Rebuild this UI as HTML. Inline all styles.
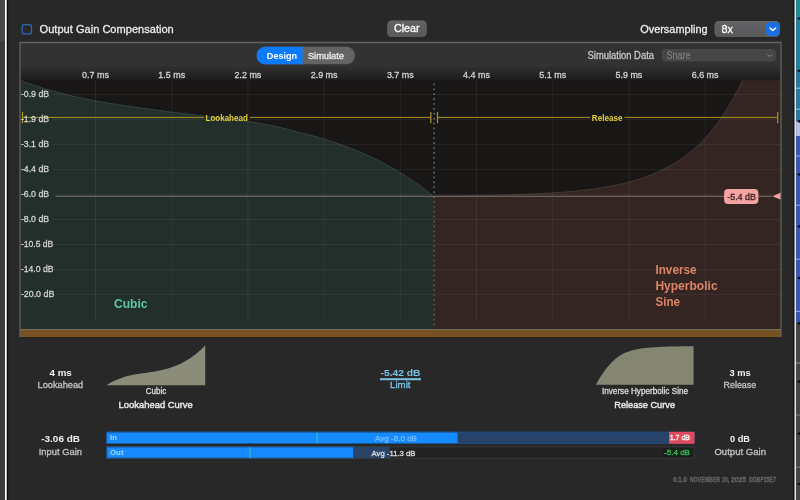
<!DOCTYPE html>
<html lang="en"><head><meta charset="utf-8"><title>Limiter</title>
<style>
html,body{margin:0;padding:0;background:#282828;overflow:hidden}
body{width:800px;height:500px;font-family:"Liberation Sans", sans-serif}
svg{display:block;filter:blur(0.3px)}
</style></head><body>
<svg width="800" height="500" viewBox="0 0 800 500" font-family='"Liberation Sans", sans-serif'>
<rect x="0" y="0" width="800" height="500" fill="#282828"/>
<rect x="0" y="0" width="5.2" height="500" fill="#3b3b3b"/>
<rect x="0" y="0" width="5.2" height="41.2" fill="#494949"/>
<rect x="5" y="0" width="1.9" height="500" fill="#ffffff"/>
<rect x="6.8" y="0" width="1.3" height="500" fill="#0c0c0c"/>
<rect x="793.4" y="0" width="1.1" height="500" fill="#0a0a0a"/>
<rect x="794.5" y="0" width="1.7" height="500" fill="#e4e8ee"/>
<rect x="796.2" y="0" width="3.8" height="17" fill="#1c8e96"/>
<rect x="796.2" y="17" width="3.8" height="54" fill="#2282a4"/>
<rect x="796.2" y="71" width="3.8" height="50" fill="#2a7aa0"/>
<rect x="796.2" y="121" width="3.8" height="15" fill="#b8c0e8"/>
<rect x="796.2" y="136" width="3.8" height="39" fill="#3a58b0"/>
<rect x="796.2" y="175" width="3.8" height="148" fill="#3a58b0"/>
<rect x="796.2" y="323" width="3.8" height="177" fill="#464646"/>
<path d="M796.6,18.5 L800,16.9 L800,20.1 Z" fill="#08101c"/>
<path d="M796.6,70.8 L800,69.2 L800,72.39999999999999 Z" fill="#08101c"/>
<path d="M796.6,121.3 L800,119.7 L800,122.89999999999999 Z" fill="#08101c"/>
<path d="M796.6,174.5 L800,172.9 L800,176.1 Z" fill="#08101c"/>
<path d="M796.6,226.5 L800,224.9 L800,228.1 Z" fill="#08101c"/>
<path d="M796.6,278 L800,276.4 L800,279.6 Z" fill="#08101c"/>
<path d="M796.6,323.3 L800,321.7 L800,324.90000000000003 Z" fill="#08101c"/>
<path d="M796.6,381.6 L800,380.0 L800,383.20000000000005 Z" fill="#08101c"/>
<path d="M796.6,433.6 L800,432.0 L800,435.20000000000005 Z" fill="#08101c"/>
<path d="M796.6,484 L800,482.4 L800,485.6 Z" fill="#08101c"/>
<rect x="796.2" y="87.60000000000001" width="3.8" height="1.2" fill="#90b8e0"/>
<rect x="796.2" y="108.60000000000001" width="3.8" height="1.2" fill="#90b8e0"/>
<rect x="796.2" y="155.4" width="3.8" height="1.2" fill="#8aa0e0"/>
<rect x="796.2" y="204.6" width="3.8" height="1.2" fill="#8aa0e0"/>
<rect x="796.2" y="258.59999999999997" width="3.8" height="1.2" fill="#8aa0e0"/>
<rect x="796.2" y="310.79999999999995" width="3.8" height="1.2" fill="#8aa0e0"/>
<rect x="796.2" y="362.4" width="3.8" height="1.2" fill="#888"/>
<rect x="796.2" y="414.4" width="3.8" height="1.2" fill="#777"/>
<rect x="796.2" y="466.59999999999997" width="3.8" height="1.2" fill="#777"/>
<rect x="22.2" y="24.7" width="9.3" height="9.2" rx="2.2" fill="#272729" stroke="#2a68b8" stroke-width="1.3"/>
<text x="39.6" y="33.1" font-size="11.4" fill="#ececec" stroke="#ececec" stroke-width="0.3" textLength="134.2" lengthAdjust="spacingAndGlyphs">Output Gain Compensation</text>
<defs><linearGradient id="bg1" x1="0" y1="0" x2="0" y2="1"><stop offset="0" stop-color="#6a6a6c"/><stop offset="0.15" stop-color="#616163"/><stop offset="1" stop-color="#59595b"/></linearGradient></defs>
<rect x="387.1" y="20.6" width="39.8" height="16.5" rx="4.5" fill="url(#bg1)"/>
<text x="394" y="32.0" font-size="11.0" fill="#ffffff" stroke="#ffffff" stroke-width="0.3" textLength="25.5" lengthAdjust="spacingAndGlyphs">Clear</text>
<text x="640.2" y="33.1" font-size="11.4" fill="#ececec" stroke="#ececec" stroke-width="0.3" textLength="67.4" lengthAdjust="spacingAndGlyphs">Oversampling</text>
<rect x="714.4" y="21" width="65.6" height="16" rx="4.5" fill="url(#bg1)"/>
<text x="721.4" y="32.6" font-size="11.4" fill="#ffffff" stroke="#ffffff" stroke-width="0.3" textLength="11.4" lengthAdjust="spacingAndGlyphs">8x</text>
<rect x="766" y="22.2" width="13.6" height="13.8" rx="4" fill="#1b6fe3"/>
<path d="M770,28 L772.8,30.5 L775.6,28" fill="none" stroke="#fff" stroke-width="1.5" stroke-linecap="round" stroke-linejoin="round"/>
<rect x="20" y="42.5" width="761" height="294.8" fill="#323232"/>
<rect x="20" y="67.8" width="761" height="261.2" fill="#191716"/>
<path d="M20.00,80.50 C24.17,81.88 36.67,86.25 45.00,88.75 C53.33,91.25 61.67,93.50 70.00,95.50 C78.33,97.50 86.67,99.17 95.00,100.75 C103.33,102.33 111.67,103.71 120.00,105.00 C128.33,106.29 136.67,107.33 145.00,108.50 C153.33,109.67 161.67,110.92 170.00,112.00 C178.33,113.08 186.67,113.98 195.00,115.00 C203.33,116.02 211.25,117.05 220.00,118.10 C228.75,119.15 238.33,119.93 247.50,121.30 C256.67,122.67 265.83,124.30 275.00,126.30 C284.17,128.30 294.25,131.15 302.50,133.30 C310.75,135.45 315.33,136.25 324.50,139.20 C333.67,142.15 347.42,146.87 357.50,151.00 C367.58,155.13 375.83,159.08 385.00,164.00 C394.17,168.92 404.33,175.12 412.50,180.50 C420.67,185.88 430.42,193.67 434.00,196.30 L434,329 L20,329 Z" fill="#222f2a"/>
<path d="M20.00,80.50 C24.17,81.88 36.67,86.25 45.00,88.75 C53.33,91.25 61.67,93.50 70.00,95.50 C78.33,97.50 86.67,99.17 95.00,100.75 C103.33,102.33 111.67,103.71 120.00,105.00 C128.33,106.29 136.67,107.33 145.00,108.50 C153.33,109.67 161.67,110.92 170.00,112.00 C178.33,113.08 186.67,113.98 195.00,115.00 C203.33,116.02 211.25,117.05 220.00,118.10 C228.75,119.15 238.33,119.93 247.50,121.30 C256.67,122.67 265.83,124.30 275.00,126.30 C284.17,128.30 294.25,131.15 302.50,133.30 C310.75,135.45 315.33,136.25 324.50,139.20 C333.67,142.15 347.42,146.87 357.50,151.00 C367.58,155.13 375.83,159.08 385.00,164.00 C394.17,168.92 404.33,175.12 412.50,180.50 C420.67,185.88 430.42,193.67 434.00,196.30" fill="none" stroke="#3a4a45" stroke-width="0.8"/>
<path d="M434.00,196.00 L440.00,195.95 L446.00,195.90 L452.00,195.85 L458.00,195.78 L464.00,195.71 L470.00,195.63 L476.00,195.55 L482.00,195.45 L488.00,195.34 L494.00,195.22 L500.00,195.08 L506.00,194.92 L512.00,194.75 L518.00,194.56 L524.00,194.35 L530.00,194.11 L536.00,193.84 L542.00,193.54 L548.00,193.21 L554.00,192.83 L560.00,192.42 L566.00,191.95 L572.00,191.43 L578.00,190.85 L584.00,190.20 L590.00,189.47 L596.00,188.66 L602.00,187.75 L608.00,186.74 L614.00,185.61 L620.00,184.34 L626.00,182.93 L632.00,181.35 L638.00,179.58 L644.00,177.61 L650.00,175.41 L656.00,172.94 L662.00,170.19 L668.00,167.12 L674.00,163.68 L680.00,159.84 L686.00,155.55 L692.00,150.76 L698.00,145.40 L704.00,139.42 L710.00,132.73 L716.00,125.26 L722.00,116.91 L728.00,107.57 L734.00,97.15 L740.00,85.50 L742.50,80.25 L781,80.25 L781,329 L434,329 Z" fill="#342522"/>
<path d="M434.00,196.00 L440.00,195.95 L446.00,195.90 L452.00,195.85 L458.00,195.78 L464.00,195.71 L470.00,195.63 L476.00,195.55 L482.00,195.45 L488.00,195.34 L494.00,195.22 L500.00,195.08 L506.00,194.92 L512.00,194.75 L518.00,194.56 L524.00,194.35 L530.00,194.11 L536.00,193.84 L542.00,193.54 L548.00,193.21 L554.00,192.83 L560.00,192.42 L566.00,191.95 L572.00,191.43 L578.00,190.85 L584.00,190.20 L590.00,189.47 L596.00,188.66 L602.00,187.75 L608.00,186.74 L614.00,185.61 L620.00,184.34 L626.00,182.93 L632.00,181.35 L638.00,179.58 L644.00,177.61 L650.00,175.41 L656.00,172.94 L662.00,170.19 L668.00,167.12 L674.00,163.68 L680.00,159.84 L686.00,155.55 L692.00,150.76 L698.00,145.40 L704.00,139.42 L710.00,132.73 L716.00,125.26 L722.00,116.91 L728.00,107.57 L734.00,97.15 L740.00,85.50 L742.50,80.25" fill="none" stroke="#4e3f3b" stroke-width="0.8"/>
<defs><linearGradient id="rg" x1="0" y1="0" x2="0" y2="1"><stop offset="0" stop-color="#2f2f2f"/><stop offset="0.6" stop-color="#2c2c2c" stop-opacity="0.5"/><stop offset="1" stop-color="#2c2c2c" stop-opacity="0"/></linearGradient></defs>
<rect x="20" y="67.8" width="761" height="14" fill="url(#rg)"/>
<rect x="95.00" y="80" width="1" height="240.5" fill="#ffffff" fill-opacity="0.06"/>
<rect x="171.20" y="80" width="1" height="240.5" fill="#ffffff" fill-opacity="0.06"/>
<rect x="247.40" y="80" width="1" height="240.5" fill="#ffffff" fill-opacity="0.06"/>
<rect x="323.60" y="80" width="1" height="240.5" fill="#ffffff" fill-opacity="0.06"/>
<rect x="399.80" y="80" width="1" height="240.5" fill="#ffffff" fill-opacity="0.06"/>
<rect x="476.00" y="80" width="1" height="240.5" fill="#ffffff" fill-opacity="0.06"/>
<rect x="552.20" y="80" width="1" height="240.5" fill="#ffffff" fill-opacity="0.06"/>
<rect x="628.40" y="80" width="1" height="240.5" fill="#ffffff" fill-opacity="0.06"/>
<rect x="704.60" y="80" width="1" height="240.5" fill="#ffffff" fill-opacity="0.06"/>
<rect x="53" y="94.0" width="728" height="1" fill="#ffffff" fill-opacity="0.055"/>
<rect x="53" y="119.0" width="728" height="1" fill="#ffffff" fill-opacity="0.055"/>
<rect x="53" y="144.0" width="728" height="1" fill="#ffffff" fill-opacity="0.055"/>
<rect x="53" y="169.0" width="728" height="1" fill="#ffffff" fill-opacity="0.055"/>
<rect x="53" y="194.0" width="728" height="1" fill="#ffffff" fill-opacity="0.055"/>
<rect x="53" y="219.0" width="728" height="1" fill="#ffffff" fill-opacity="0.055"/>
<rect x="53" y="244.0" width="728" height="1" fill="#ffffff" fill-opacity="0.055"/>
<rect x="53" y="269.0" width="728" height="1" fill="#ffffff" fill-opacity="0.055"/>
<rect x="53" y="294.0" width="728" height="1" fill="#ffffff" fill-opacity="0.055"/>
<rect x="433.45" y="83.51" width="1.3" height="1.7" fill="#7a7a7a"/>
<rect x="433.45" y="88.41" width="1.3" height="1.7" fill="#7a7a7a"/>
<rect x="433.45" y="93.31" width="1.3" height="1.7" fill="#7a7a7a"/>
<rect x="433.45" y="98.20" width="1.3" height="1.7" fill="#7a7a7a"/>
<rect x="433.45" y="103.10" width="1.3" height="1.7" fill="#7a7a7a"/>
<rect x="433.45" y="108.00" width="1.3" height="1.7" fill="#7a7a7a"/>
<rect x="433.45" y="112.90" width="1.3" height="1.7" fill="#7a7a7a"/>
<rect x="433.45" y="117.80" width="1.3" height="1.7" fill="#7a7a7a"/>
<rect x="433.45" y="122.69" width="1.3" height="1.7" fill="#7a7a7a"/>
<rect x="433.45" y="127.59" width="1.3" height="1.7" fill="#7a7a7a"/>
<rect x="433.45" y="132.49" width="1.3" height="1.7" fill="#7a7a7a"/>
<rect x="433.45" y="137.39" width="1.3" height="1.7" fill="#7a7a7a"/>
<rect x="433.45" y="142.29" width="1.3" height="1.7" fill="#7a7a7a"/>
<rect x="433.45" y="147.18" width="1.3" height="1.7" fill="#7a7a7a"/>
<rect x="433.45" y="152.08" width="1.3" height="1.7" fill="#7a7a7a"/>
<rect x="433.45" y="156.98" width="1.3" height="1.7" fill="#7a7a7a"/>
<rect x="433.45" y="161.88" width="1.3" height="1.7" fill="#7a7a7a"/>
<rect x="433.45" y="166.78" width="1.3" height="1.7" fill="#7a7a7a"/>
<rect x="433.45" y="171.67" width="1.3" height="1.7" fill="#7a7a7a"/>
<rect x="433.45" y="176.57" width="1.3" height="1.7" fill="#7a7a7a"/>
<rect x="433.45" y="181.47" width="1.3" height="1.7" fill="#7a7a7a"/>
<rect x="433.45" y="186.37" width="1.3" height="1.7" fill="#7a7a7a"/>
<rect x="433.45" y="191.27" width="1.3" height="1.7" fill="#7a7a7a"/>
<rect x="433.45" y="196.16" width="1.3" height="1.7" fill="#7a7a7a"/>
<rect x="433.45" y="201.06" width="1.3" height="1.7" fill="#626262"/>
<rect x="433.45" y="205.96" width="1.3" height="1.7" fill="#626262"/>
<rect x="433.45" y="210.86" width="1.3" height="1.7" fill="#626262"/>
<rect x="433.45" y="215.76" width="1.3" height="1.7" fill="#626262"/>
<rect x="433.45" y="220.65" width="1.3" height="1.7" fill="#626262"/>
<rect x="433.45" y="225.55" width="1.3" height="1.7" fill="#626262"/>
<rect x="433.45" y="230.45" width="1.3" height="1.7" fill="#626262"/>
<rect x="433.45" y="235.35" width="1.3" height="1.7" fill="#626262"/>
<rect x="433.45" y="240.25" width="1.3" height="1.7" fill="#626262"/>
<rect x="433.45" y="245.14" width="1.3" height="1.7" fill="#626262"/>
<rect x="433.45" y="250.04" width="1.3" height="1.7" fill="#626262"/>
<rect x="433.45" y="254.94" width="1.3" height="1.7" fill="#626262"/>
<rect x="433.45" y="259.84" width="1.3" height="1.7" fill="#626262"/>
<rect x="433.45" y="264.74" width="1.3" height="1.7" fill="#626262"/>
<rect x="433.45" y="269.63" width="1.3" height="1.7" fill="#626262"/>
<rect x="433.45" y="274.53" width="1.3" height="1.7" fill="#626262"/>
<rect x="433.45" y="279.43" width="1.3" height="1.7" fill="#626262"/>
<rect x="433.45" y="284.33" width="1.3" height="1.7" fill="#626262"/>
<rect x="433.45" y="289.23" width="1.3" height="1.7" fill="#626262"/>
<rect x="433.45" y="294.12" width="1.3" height="1.7" fill="#626262"/>
<rect x="433.45" y="299.02" width="1.3" height="1.7" fill="#626262"/>
<rect x="433.45" y="303.92" width="1.3" height="1.7" fill="#626262"/>
<rect x="433.45" y="308.82" width="1.3" height="1.7" fill="#626262"/>
<rect x="433.45" y="313.72" width="1.3" height="1.7" fill="#626262"/>
<rect x="433.45" y="318.61" width="1.3" height="1.7" fill="#626262"/>
<rect x="433.45" y="323.51" width="1.3" height="1.7" fill="#626262"/>
<rect x="55.6" y="195.8" width="716.4" height="1" fill="#7a726c"/>
<rect x="22.5" y="116.9" width="181.3" height="1" fill="#a8941f"/>
<rect x="249.8" y="116.9" width="181.0" height="1" fill="#a8941f"/>
<rect x="437.5" y="116.9" width="152.5" height="1" fill="#a8941f"/>
<rect x="624.5" y="116.9" width="153.2" height="1" fill="#a8941f"/>
<rect x="21.9" y="112" width="1.2" height="11.2" fill="#a8941f"/>
<rect x="430.2" y="112" width="1.2" height="11.2" fill="#a8941f"/>
<rect x="436.9" y="112" width="1.2" height="11.2" fill="#a8941f"/>
<rect x="777.1" y="112" width="1.2" height="11.2" fill="#a8941f"/>
<text x="205.5" y="120.8" font-size="9" fill="#e6d03a" font-weight="bold" textLength="42.3" lengthAdjust="spacingAndGlyphs">Lookahead</text>
<text x="591.8" y="120.8" font-size="9" fill="#e6d03a" font-weight="bold" textLength="30.7" lengthAdjust="spacingAndGlyphs">Release</text>
<text x="20.9" y="97.0" font-size="8.9" fill="#d2d2d2" stroke="#d2d2d2" stroke-width="0.3" textLength="28.2" lengthAdjust="spacingAndGlyphs">-0.9 dB</text>
<text x="20.9" y="122.0" font-size="8.9" fill="#d2d2d2" stroke="#d2d2d2" stroke-width="0.3" textLength="28.2" lengthAdjust="spacingAndGlyphs">-1.9 dB</text>
<text x="20.9" y="147.0" font-size="8.9" fill="#d2d2d2" stroke="#d2d2d2" stroke-width="0.3" textLength="28.2" lengthAdjust="spacingAndGlyphs">-3.1 dB</text>
<text x="20.9" y="172.0" font-size="8.9" fill="#d2d2d2" stroke="#d2d2d2" stroke-width="0.3" textLength="28.2" lengthAdjust="spacingAndGlyphs">-4.4 dB</text>
<text x="20.9" y="197.0" font-size="8.9" fill="#d2d2d2" stroke="#d2d2d2" stroke-width="0.3" textLength="28.2" lengthAdjust="spacingAndGlyphs">-6.0 dB</text>
<text x="20.9" y="222.0" font-size="8.9" fill="#d2d2d2" stroke="#d2d2d2" stroke-width="0.3" textLength="28.2" lengthAdjust="spacingAndGlyphs">-8.0 dB</text>
<text x="20.9" y="247.0" font-size="8.9" fill="#d2d2d2" stroke="#d2d2d2" stroke-width="0.3" textLength="32.4" lengthAdjust="spacingAndGlyphs">-10.5 dB</text>
<text x="20.9" y="272.0" font-size="8.9" fill="#d2d2d2" stroke="#d2d2d2" stroke-width="0.3" textLength="32.6" lengthAdjust="spacingAndGlyphs">-14.0 dB</text>
<text x="20.9" y="297.0" font-size="8.9" fill="#d2d2d2" stroke="#d2d2d2" stroke-width="0.3" textLength="33.4" lengthAdjust="spacingAndGlyphs">-20.0 dB</text>
<text x="82.1" y="77.9" font-size="9.1" fill="#d2d2d2" stroke="#d2d2d2" stroke-width="0.3" textLength="26.8" lengthAdjust="spacingAndGlyphs">0.7 ms</text>
<text x="158.3" y="77.9" font-size="9.1" fill="#d2d2d2" stroke="#d2d2d2" stroke-width="0.3" textLength="26.8" lengthAdjust="spacingAndGlyphs">1.5 ms</text>
<text x="234.5" y="77.9" font-size="9.1" fill="#d2d2d2" stroke="#d2d2d2" stroke-width="0.3" textLength="26.8" lengthAdjust="spacingAndGlyphs">2.2 ms</text>
<text x="310.7" y="77.9" font-size="9.1" fill="#d2d2d2" stroke="#d2d2d2" stroke-width="0.3" textLength="26.8" lengthAdjust="spacingAndGlyphs">2.9 ms</text>
<text x="386.9" y="77.9" font-size="9.1" fill="#d2d2d2" stroke="#d2d2d2" stroke-width="0.3" textLength="26.8" lengthAdjust="spacingAndGlyphs">3.7 ms</text>
<text x="463.1" y="77.9" font-size="9.1" fill="#d2d2d2" stroke="#d2d2d2" stroke-width="0.3" textLength="26.8" lengthAdjust="spacingAndGlyphs">4.4 ms</text>
<text x="539.3" y="77.9" font-size="9.1" fill="#d2d2d2" stroke="#d2d2d2" stroke-width="0.3" textLength="26.8" lengthAdjust="spacingAndGlyphs">5.1 ms</text>
<text x="615.5" y="77.9" font-size="9.1" fill="#d2d2d2" stroke="#d2d2d2" stroke-width="0.3" textLength="26.8" lengthAdjust="spacingAndGlyphs">5.9 ms</text>
<text x="691.7" y="77.9" font-size="9.1" fill="#d2d2d2" stroke="#d2d2d2" stroke-width="0.3" textLength="26.8" lengthAdjust="spacingAndGlyphs">6.6 ms</text>
<text x="114" y="307.6" font-size="12.2" fill="#5fc8a0" font-weight="bold" textLength="33.5" lengthAdjust="spacingAndGlyphs">Cubic</text>
<text x="655.4" y="273.6" font-size="12.2" fill="#dd8468" font-weight="bold" textLength="41.2" lengthAdjust="spacingAndGlyphs">Inverse</text>
<text x="655.4" y="289.8" font-size="12.2" fill="#dd8468" font-weight="bold" textLength="62.2" lengthAdjust="spacingAndGlyphs">Hyperbolic</text>
<text x="655.4" y="306" font-size="12.2" fill="#dd8468" font-weight="bold" textLength="24.6" lengthAdjust="spacingAndGlyphs">Sine</text>
<rect x="724.1" y="188.9" width="34.3" height="15.1" rx="4" fill="#f3a3a2"/>
<text x="727.2" y="199.5" font-size="9.1" fill="#3a1c1c" stroke="#3a1c1c" stroke-width="0.3" textLength="28.8" lengthAdjust="spacingAndGlyphs">-5.4 dB</text>
<path d="M772.5,196.2 L781,192.6 L781,199.8 Z" fill="#f2a3a3"/>
<rect x="20" y="329" width="761" height="1.1" fill="#726e55"/>
<rect x="20" y="330" width="761" height="7.3" fill="#785122"/>
<rect x="19.4" y="337.3" width="762.2" height="1" fill="#1f1f1d"/>
<path d="M20,337.3 L20,42.5 L781,42.5 L781,337.3" fill="none" stroke="#626262" stroke-width="1.3"/>
<rect x="256.6" y="46.8" width="98.4" height="17.4" rx="8.7" fill="#646466"/>
<path d="M302.5,46.8 H265.3 a8.7,8.7 0 0 0 0,17.4 H302.5 Z" fill="#0a7aff"/>
<text x="266.8" y="58.7" font-size="9.6" fill="#ffffff" font-weight="bold" textLength="30.4" lengthAdjust="spacingAndGlyphs">Design</text>
<text x="307.9" y="58.7" font-size="9.6" fill="#f0f0f0" stroke="#f0f0f0" stroke-width="0.3" textLength="36.1" lengthAdjust="spacingAndGlyphs">Simulate</text>
<text x="587.5" y="59.1" font-size="10.2" fill="#c8c8c8" stroke="#c8c8c8" stroke-width="0.3" textLength="66.5" lengthAdjust="spacingAndGlyphs">Simulation Data</text>
<rect x="661.6" y="49" width="114.4" height="12.6" rx="4" fill="#464648"/>
<text x="666.5" y="59.0" font-size="10.2" fill="#7c7c7e" stroke="#7c7c7e" stroke-width="0.3" textLength="24.1" lengthAdjust="spacingAndGlyphs">Snare</text>
<path d="M767.6,54.6 L769.6,56.6 L771.6,54.6" fill="none" stroke="#8a8a8a" stroke-width="1" stroke-linecap="round" stroke-linejoin="round"/>
<text x="49.5" y="375.8" font-size="9.5" fill="#f2f2f2" font-weight="bold" textLength="22.25" lengthAdjust="spacingAndGlyphs">4 ms</text>
<text x="37.5" y="387.5" font-size="9.8" fill="#c4c4c4" stroke="#c4c4c4" stroke-width="0.3" textLength="45.75" lengthAdjust="spacingAndGlyphs">Lookahead</text>
<path d="M106.20,385.20 C107.46,384.50 110.20,382.53 113.75,381.00 C117.30,379.47 122.91,377.27 127.50,376.00 C132.09,374.73 136.72,374.17 141.30,373.40 C145.88,372.63 150.42,372.27 155.00,371.40 C159.58,370.53 164.22,369.65 168.80,368.20 C173.38,366.75 177.92,365.11 182.50,362.70 C187.08,360.29 192.52,356.60 196.30,353.75 C200.08,350.90 203.72,346.96 205.20,345.60 L205.2,385.2 Z" fill="#8b8c79"/>
<text x="145.7" y="393.75" font-size="8.7" fill="#dcdcdc" stroke="#dcdcdc" stroke-width="0.3" textLength="20.6" lengthAdjust="spacingAndGlyphs">Cubic</text>
<text x="118.6" y="408.2" font-size="9.9" fill="#e6e6e6" textLength="74.2" lengthAdjust="spacingAndGlyphs" stroke="#e6e6e6" stroke-width="0.45">Lookahead Curve</text>
<text x="380.5" y="375.8" font-size="9.5" fill="#7cc4e6" font-weight="bold" textLength="40.0" lengthAdjust="spacingAndGlyphs">-5.42 dB</text>
<rect x="380" y="378.2" width="41" height="2" fill="#7cc4e6"/>
<text x="390" y="388" font-size="9.8" fill="#7cc4e6" stroke="#7cc4e6" stroke-width="0.3" textLength="20.5" lengthAdjust="spacingAndGlyphs">Limit</text>
<path d="M595.80,384.80 C596.67,383.33 599.22,378.77 601.00,376.00 C602.78,373.23 604.67,370.53 606.50,368.20 C608.33,365.87 610.17,363.83 612.00,362.00 C613.83,360.17 615.43,358.68 617.50,357.20 C619.57,355.72 622.10,354.23 624.40,353.10 C626.70,351.98 629.02,351.15 631.30,350.45 C633.58,349.75 635.82,349.31 638.10,348.90 C640.38,348.49 641.55,348.33 645.00,348.00 C648.45,347.67 654.22,347.15 658.80,346.90 C663.38,346.65 666.70,346.60 672.50,346.50 C678.30,346.40 690.08,346.33 693.60,346.30 L693.6,384.8 Z" fill="#858672"/>
<text x="602" y="393.75" font-size="8.7" fill="#dcdcdc" stroke="#dcdcdc" stroke-width="0.3" textLength="86" lengthAdjust="spacingAndGlyphs">Inverse Hyperbolic Sine</text>
<text x="614.25" y="408.2" font-size="9.9" fill="#e6e6e6" textLength="60.75" lengthAdjust="spacingAndGlyphs" stroke="#e6e6e6" stroke-width="0.45">Release Curve</text>
<text x="729.5" y="375.8" font-size="9.5" fill="#f2f2f2" font-weight="bold" textLength="21.25" lengthAdjust="spacingAndGlyphs">3 ms</text>
<text x="723.5" y="387.5" font-size="9.8" fill="#c4c4c4" stroke="#c4c4c4" stroke-width="0.3" textLength="32.75" lengthAdjust="spacingAndGlyphs">Release</text>
<text x="41.25" y="442" font-size="9.5" fill="#f2f2f2" font-weight="bold" textLength="38.75" lengthAdjust="spacingAndGlyphs">-3.06 dB</text>
<text x="38.75" y="454.7" font-size="9.8" fill="#c4c4c4" stroke="#c4c4c4" stroke-width="0.3" textLength="43.25" lengthAdjust="spacingAndGlyphs">Input Gain</text>
<text x="730" y="442" font-size="9.5" fill="#f2f2f2" font-weight="bold" textLength="20" lengthAdjust="spacingAndGlyphs">0 dB</text>
<text x="714.4" y="454.5" font-size="9.8" fill="#c4c4c4" stroke="#c4c4c4" stroke-width="0.3" textLength="51.6" lengthAdjust="spacingAndGlyphs">Output Gain</text>
<rect x="106.3" y="431.8" width="588.2" height="12" fill="#27436a"/>
<rect x="106.3" y="431.8" width="351.2" height="12" fill="#168aff"/>
<rect x="106.7" y="432.2" width="587.4000000000001" height="11.2" fill="none" stroke="#1c4f86" stroke-width="0.8"/>
<rect x="669" y="431.8" width="25.5" height="12" fill="#e04a5a"/>
<rect x="316.6" y="432.6" width="1" height="10.6" fill="#35c7b0"/>
<text x="110" y="440.4" font-size="7.6" fill="#a8d2ff" font-weight="bold" textLength="6.9" lengthAdjust="spacingAndGlyphs">In</text>
<text x="375" y="440.5" font-size="7.7" fill="#7ab8ff" stroke="#7ab8ff" stroke-width="0.3" textLength="42" lengthAdjust="spacingAndGlyphs">Avg -8.0 dB</text>
<text x="669.8" y="440.3" font-size="7.8" fill="#ffffff" stroke="#ffffff" stroke-width="0.3" textLength="20.2" lengthAdjust="spacingAndGlyphs">1.7 dB</text>
<rect x="106.3" y="446.4" width="588.2" height="12.2" fill="#232323"/>
<rect x="106.3" y="446.4" width="283.5" height="12.2" fill="#2a4468"/>
<rect x="106.3" y="446.4" width="246.7" height="12.2" fill="#168aff"/>
<rect x="106.7" y="446.8" width="587.4000000000001" height="11.4" fill="none" stroke="#3c3c3c" stroke-width="0.8"/>
<rect x="106.7" y="446.8" width="246.7" height="11.4" fill="none" stroke="#1c4f86" stroke-width="0.8"/>
<rect x="249.6" y="447.2" width="1" height="10.8" fill="#35c7b0"/>
<text x="110" y="455.4" font-size="7.6" fill="#a8d2ff" font-weight="bold" textLength="13.5" lengthAdjust="spacingAndGlyphs">Out</text>
<text x="371.5" y="455.5" font-size="7.7" fill="#dcdcdc" stroke="#dcdcdc" stroke-width="0.3" textLength="44.0" lengthAdjust="spacingAndGlyphs">Avg -11.3 dB</text>
<rect x="663" y="448" width="30" height="9.4" fill="#182018"/>
<text x="664" y="455.4" font-size="7.9" fill="#33bb52" textLength="26" lengthAdjust="spacingAndGlyphs" stroke="#33bb52" stroke-width="0.35">-5.4 dB</text>
<text y="481.6" font-size="6.8" font-weight="bold" fill="#646464" stroke="#646464" stroke-width="0.3"><tspan x="673.2" textLength="13.8" lengthAdjust="spacingAndGlyphs">0.1.0</tspan> <tspan x="690" textLength="30" lengthAdjust="spacingAndGlyphs">NOVEMBER</tspan> <tspan x="722" textLength="7.2" lengthAdjust="spacingAndGlyphs">20,</tspan> <tspan x="731" textLength="15" lengthAdjust="spacingAndGlyphs">2025</tspan> <tspan x="749" textLength="27" lengthAdjust="spacingAndGlyphs">DDBF15E7</tspan></text>
</svg>
</body></html>
